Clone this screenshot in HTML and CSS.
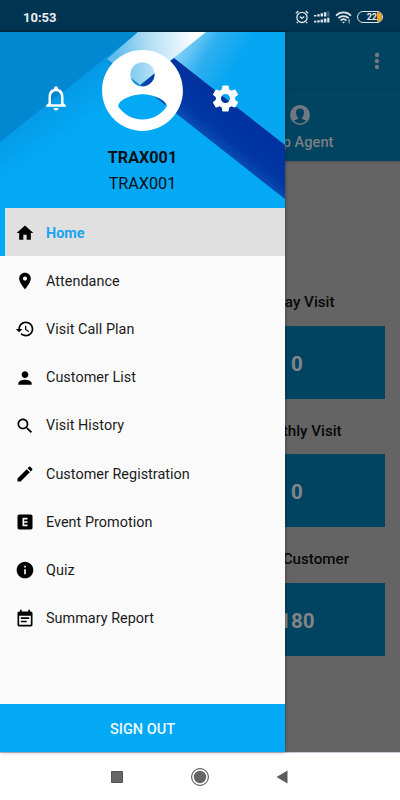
FILE: index.html
```html
<!DOCTYPE html>
<html lang="en">
<head>
    <meta charset="UTF-8">
    <meta name="viewport" content="width=device-width, initial-scale=1.0">
    <title>TRAX001 - Home</title>
    <link rel="stylesheet" href="styles.css">
</head>
<body>
    <div class="phone">
        <header class="status-bar">
            <span class="clock">10:53</span>
            <div class="status-icons">
                <svg width="14" height="14" viewBox="0 0 14 14" fill="none" stroke="#dfe6ea" stroke-width="1.3">
                    <circle cx="7" cy="7.4" r="5.1"/>
                    <path d="M.8 3.2 3.4 1M13.2 3.2 10.6 1M2.8 12l-1 1.2M11.2 12l1 1.2M4.8 6.5 7 8.4l2.3-1.9"/>
                </svg>
                <svg width="16" height="13" viewBox="0 0 16 13" fill="#dfe6ea">
                    <path d="M0 4h2.400v1.500H0zM3.300 3.200h2.400v2.300H3.300zM6.600 2.300H9v3.200H6.600zM9.900 1.200h2.400v4.300H9.900zM0 9.700h2.400v1.800H0zM3.300 9.200h2.400v2.300H3.300zM6.600 8.500H9v3H6.600zM9.900 7.600h2.400v3.900H9.900zM13.200 6.700h2.200v4.800h-2.200z"/>
                    <path d="M13.200.4h2.200v5.100h-2.200z" opacity=".3"/>
                </svg>
                <svg width="17" height="13" viewBox="0 0 17 13" fill="none" stroke="#dfe6ea" stroke-width="1.7">
                    <path d="M1 4.600c4.200-4.200 10.800-4.200 15 0M3.300 7.200c3-2.900 7.400-2.900 10.400 0M5.600 9.500c1.800-1.600 4-1.600 5.800 0"/>
                    <path d="M8.500 12.600 6.900 10.700h3.200z" fill="#dfe6ea" stroke="none"/>
                    <path d="M14.200 8.500v4M13 9.700l1.200-1.200" stroke-width=".8"/>
                </svg>
                <span class="battery"><b>22</b><i></i></span>
            </div>
        </header>

        <main class="screen">
            <div class="app-bar">
                <svg width="6" height="18" viewBox="0 0 6 18" fill="#787878">
                    <circle cx="3" cy="3" r="2.200"/><circle cx="3" cy="9" r="2.200"/><circle cx="3" cy="15" r="2.200"/>
                </svg>
            </div>
            <div class="tabs">
                <div class="tab">
                    <svg width="20" height="20" viewBox="0 0 20 20">
                        <circle cx="10" cy="10" r="9.200" fill="#014462" stroke="#717980" stroke-width="1.400"/>
                        <path fill="#717980" d="M10 .8a9.200 9.200 0 0 0-6.800 15.400c1.400-1 3.300-1.300 4.600-2.100.3-.5.2-1.200 0-1.700C6.600 11.300 6 9.300 6 7.300 6 5 7.600 3.500 10 3.500s4 1.500 4 3.800c0 2-.6 4-1.800 5.100-.2.500-.3 1.200 0 1.700 1.300.8 3.200 1.100 4.600 2.100A9.200 9.200 0 0 0 10 .8z"/>
                    </svg>
                    <span>Top Agent</span>
                </div>
            </div>
            <div class="stats">
                <h2>Today Visit</h2>
                <div class="stat">0</div>
                <h2>Monthly Visit</h2>
                <div class="stat">0</div>
                <h2>Total Customer</h2>
                <div class="stat">180</div>
            </div>

            <aside class="drawer">
                <div class="drawer-header">
                    <svg class="artwork" width="285" height="176" viewBox="0 0 285 176">
                        <defs>
                            <linearGradient id="base" gradientUnits="userSpaceOnUse" x1="50" y1="20" x2="95" y2="85">
                                <stop offset=".25" stop-color="#0692e0"/>
                                <stop offset="1" stop-color="#03a9f4"/>
                            </linearGradient>
                            <linearGradient id="beam" gradientUnits="userSpaceOnUse" x1="115" y1="20" x2="196" y2="14">
                                <stop offset="0" stop-color="#61bcec"/>
                                <stop offset=".45" stop-color="#b5e0f5"/>
                                <stop offset="1" stop-color="#fff"/>
                            </linearGradient>
                            <linearGradient id="sky" gradientUnits="userSpaceOnUse" x1="183" y1="8" x2="232" y2="38">
                                <stop offset="0" stop-color="#8bd3f8"/>
                                <stop offset=".5" stop-color="#2cafef"/>
                                <stop offset="1" stop-color="#07a6f2"/>
                            </linearGradient>
                            <linearGradient id="band" gradientUnits="userSpaceOnUse" x1="238" y1="88" x2="211" y2="121">
                                <stop offset="0" stop-color="#00339f"/>
                                <stop offset=".5" stop-color="#0238a3"/>
                                <stop offset="1" stop-color="#0a5cbc"/>
                            </linearGradient>
                        </defs>
                        <path fill="url(#base)" d="M0 0h285v176H0z"/>
                        <path fill="#0288d1" d="M0 0h138L0 110z"/>
                        <path fill="url(#sky)" d="M206 0h79v114L172 26z"/>
                        <path fill="url(#band)" d="M174 26l111 87v54L140 53z"/>
                        <path fill="#0b86d8" d="M107 27l33 26-8 6-18-20z"/>
                        <path fill="url(#beam)" d="M138 0h68l-66 53-33-26z"/>
                    </svg>
                    <div class="profile-row">
                        <svg width="30" height="30" viewBox="0 0 24 24" fill="#fff"><path d="M12 22c1.100 0 2-.9 2-2h-4c0 1.100.9 2 2 2zm6-6v-5c0-3.070-1.630-5.640-4.500-6.320V4c0-.83-.67-1.500-1.500-1.500s-1.500.67-1.500 1.500v.68C7.640 5.360 6 7.920 6 11v5l-2 2v1h16v-1l-2-2zm-2 1H8v-6c0-2.480 1.510-4.500 4-4.500s4 2.020 4 4.500v6z"/></svg>
                        <svg class="avatar" width="97" height="97" viewBox="0 0 24 24" fill="#fff"><path d="M12 2C6.480 2 2 6.480 2 12s4.480 10 10 10 10-4.480 10-10S17.520 2 12 2zm0 3c1.660 0 3 1.340 3 3s-1.340 3-3 3-3-1.340-3-3 1.340-3 3-3zm0 14.200c-2.500 0-4.710-1.280-6-3.220.03-1.990 4-3.080 6-3.080 1.990 0 5.970 1.090 6 3.080-1.290 1.940-3.500 3.220-6 3.220z"/></svg>
                        <svg width="31" height="31" viewBox="0 0 24 24" fill="#fff"><path d="M19.430 12.980c.04-.32.07-.64.07-.98s-.03-.66-.07-.98l2.110-1.650c.19-.15.24-.42.12-.64l-2-3.460c-.12-.22-.39-.3-.61-.22l-2.490 1c-.52-.4-1.080-.73-1.690-.98l-.38-2.650C14.460 2.180 14.250 2 14 2h-4c-.25 0-.46.18-.49.42l-.38 2.650c-.61.25-1.170.59-1.690.98l-2.490-1c-.23-.09-.49 0-.61.22l-2 3.460c-.13.22-.07.49.12.64l2.110 1.650c-.04.32-.07.65-.07.98s.03.66.07.98l-2.110 1.650c-.19.15-.24.42-.12.64l2 3.460c.12.22.39.3.61.22l2.490-1c.52.4 1.080.73 1.690.98l.38 2.650c.03.24.24.42.49.42h4c.25 0 .46-.18.49-.42l.38-2.650c.61-.25 1.170-.59 1.690-.98l2.490 1c.23.09.49 0 .61-.22l2-3.460c.12-.22.07-.49-.12-.64l-2.110-1.650zM12 15.500c-1.930 0-3.500-1.570-3.500-3.500s1.570-3.500 3.500-3.500 3.500 1.570 3.500 3.500-1.570 3.500-3.500 3.500z"/></svg>
                    </div>
                    <div class="user-name">TRAX001</div>
                    <div class="user-code">TRAX001</div>
                </div>

                <nav class="menu">
                    <a class="menu-item active">
                        <svg viewBox="0 0 24 24"><path d="M10 20v-6h4v6h5v-8h3L12 3 2 12h3v8z"/></svg>
                        <span>Home</span>
                    </a>
                    <a class="menu-item">
                        <svg viewBox="0 0 24 24"><path d="M12 2C8.130 2 5 5.130 5 9c0 5.250 7 13 7 13s7-7.750 7-13c0-3.870-3.130-7-7-7zm0 9.500c-1.380 0-2.500-1.120-2.500-2.500s1.120-2.500 2.500-2.500 2.500 1.120 2.500 2.500-1.120 2.500-2.500 2.500z"/></svg>
                        <span>Attendance</span>
                    </a>
                    <a class="menu-item">
                        <svg viewBox="0 0 24 24"><path d="M13 3c-4.970 0-9 4.030-9 9H1l3.890 3.890.07.14L9 12H6c0-3.870 3.130-7 7-7s7 3.130 7 7-3.130 7-7 7c-1.930 0-3.680-.79-4.940-2.060l-1.420 1.420C8.270 19.990 10.510 21 13 21c4.970 0 9-4.030 9-9s-4.030-9-9-9zm-1 5v5l4.280 2.540.72-1.210-3.500-2.080V8H12z"/></svg>
                        <span>Visit Call Plan</span>
                    </a>
                    <a class="menu-item">
                        <svg viewBox="0 0 24 24"><path d="M12 12c2.210 0 4-1.790 4-4s-1.790-4-4-4-4 1.790-4 4 1.790 4 4 4zm0 2c-2.670 0-8 1.340-8 4v2h16v-2c0-2.660-5.330-4-8-4z"/></svg>
                        <span>Customer List</span>
                    </a>
                    <a class="menu-item">
                        <svg viewBox="0 0 24 24"><path d="M15.500 14h-.79l-.28-.27C15.410 12.590 16 11.110 16 9.500 16 5.910 13.090 3 9.500 3S3 5.910 3 9.500 5.910 16 9.500 16c1.610 0 3.090-.59 4.230-1.570l.27.28v.79l5 4.990L20.490 19l-4.990-5zm-6 0C7.010 14 5 11.990 5 9.500S7.010 5 9.500 5 14 7.010 14 9.500 11.990 14 9.500 14z"/></svg>
                        <span>Visit History</span>
                    </a>
                    <a class="menu-item">
                        <svg viewBox="0 0 24 24"><path d="M3 17.250V21h3.750L17.810 9.940l-3.750-3.750L3 17.250zM20.710 7.040c.39-.39.39-1.020 0-1.410l-2.340-2.340c-.39-.39-1.020-.39-1.410 0l-1.830 1.830 3.750 3.750 1.830-1.830z"/></svg>
                        <span>Customer Registration</span>
                    </a>
                    <a class="menu-item">
                        <svg viewBox="0 0 24 24"><path d="M19 3H5c-1.100 0-2 .9-2 2v14c0 1.100.9 2 2 2h14c1.100 0 2-.9 2-2V5c0-1.100-.9-2-2-2zm-4 6h-4v2h4v2h-4v2h4v2H9V7h6v2z"/></svg>
                        <span>Event Promotion</span>
                    </a>
                    <a class="menu-item">
                        <svg viewBox="0 0 24 24"><path d="M12 2C6.480 2 2 6.480 2 12s4.480 10 10 10 10-4.480 10-10S17.520 2 12 2zm1 15h-2v-6h2v6zm0-8h-2V7h2v2z"/></svg>
                        <span>Quiz</span>
                    </a>
                    <a class="menu-item">
                        <svg viewBox="0 0 24 24"><path d="M17 10H7v2h10v-2zm2-7h-1V1h-2v2H8V1H6v2H5c-1.110 0-1.990.9-1.990 2L3 19c0 1.100.89 2 2 2h14c1.100 0 2-.9 2-2V5c0-1.100-.9-2-2-2zm0 16H5V8h14v11zm-5-5H7v2h7v-2z"/></svg>
                        <span>Summary Report</span>
                    </a>
                </nav>

                <button class="sign-out">SIGN OUT</button>
            </aside>
        </main>

        <footer class="nav-bar">
            <svg width="20" height="20" viewBox="0 0 20 20"><path fill="#666" stroke="#555" d="M4.500 4.500h11v11h-11z"/></svg>
            <svg width="20" height="20" viewBox="0 0 20 20"><circle cx="10" cy="10" r="8.400" fill="none" stroke="#444"/><circle cx="10" cy="10" r="6.200" fill="#666"/></svg>
            <svg width="20" height="20" viewBox="0 0 20 20"><path fill="#5c5c5c" d="M14.500 3.500v13l-11-6.500z"/></svg>
        </footer>
    </div>
</body>
</html>
```
FILE: styles.css
```css
* {
    box-sizing: border-box;
}

body {
    margin: 0;
    font-family: Roboto, sans-serif;
    background: #fff;
}

svg {
    display: block;
    flex-shrink: 0;
}

.phone {
    width: 400px;
    height: 800px;
    display: flex;
    flex-direction: column;
    overflow: hidden;
}

/* Status bar */
.status-bar {
    height: 32px;
    padding: 3px 17px 0 23px;
    display: flex;
    align-items: center;
    justify-content: space-between;
    background: #013450;
    border-bottom: 1px solid #012b45;
}

.clock {
    color: #e9eef1;
    font-size: 13px;
    font-weight: 700;
}

.status-icons {
    display: flex;
    align-items: center;
    gap: 5px;
}

.battery {
    width: 26px;
    height: 12px;
    display: flex;
    justify-content: flex-end;
    border: 1.5px solid #dfe6ea;
    border-radius: 6px;
    overflow: hidden;
    color: #e9eef1;
    font-size: 9px;
    line-height: 10.5px;
}

.battery i {
    width: 5px;
    background: #f5a623;
}

/* Dimmed home screen */
.screen {
    position: relative;
    height: 720px;
    background: #646464;
}

.app-bar {
    height: 58px;
    padding-right: 20px;
    display: flex;
    align-items: center;
    justify-content: flex-end;
    background: #014462;
    border-bottom: 1px solid #013b58;
}

.tabs {
    height: 71px;
    display: flex;
    justify-content: flex-end;
    background: #014462;
    box-shadow: 0 1px 3px rgba(0, 0, 0, 0.2);
}

.tab {
    width: 200px;
    padding-top: 15px;
    display: flex;
    flex-direction: column;
    align-items: center;
    gap: 7px;
    color: #7b7f81;
    font-size: 14.6px;
    font-weight: 500;
    line-height: 20px;
}

.stats {
    width: 176px;
    margin: 129px 0 0 209px;
    text-align: center;
}

.stats h2 {
    height: 35.5px;
    margin: 0;
    color: #080808;
    font-size: 15.2px;
    font-weight: 500;
    line-height: 25px;
}

.stat {
    height: 73.3px;
    margin-bottom: 19.9px;
    background: #014462;
    color: #858585;
    font-size: 20.5px;
    font-weight: 700;
    line-height: 76px;
}

/* Drawer */
.drawer {
    position: absolute;
    top: 0;
    left: 0;
    width: 285px;
    height: 720px;
    display: flex;
    flex-direction: column;
    background: #fafafa;
    box-shadow: 0 0 4px rgba(0, 0, 0, 0.4);
}

.drawer-header {
    position: relative;
    height: 176px;
    color: #0c1015;
    text-align: center;
}

.artwork {
    position: absolute;
    top: 0;
    left: 0;
}

.profile-row {
    position: relative;
    height: 116px;
    padding: 16px 44px 0 41px;
    display: flex;
    align-items: center;
    justify-content: space-between;
}

.avatar {
    margin: -16px 0 0 4px;
}

.user-name,
.user-code {
    position: relative;
    font-size: 16.2px;
    line-height: 20px;
}

.user-name {
    font-weight: 700;
}

.user-code {
    margin-top: 6px;
}

.menu {
    flex: 1;
}

.menu-item {
    height: 48.2px;
    padding: 2px 0 0 15px;
    display: flex;
    align-items: center;
    gap: 11px;
    color: #1b1b1b;
    font-size: 14.4px;
    letter-spacing: 0.03px;
}

.menu-item svg {
    width: 20px;
    height: 20px;
    fill: #000;
}

.menu-item.active {
    padding-left: 10px;
    border-left: 5px solid #03a9f4;
    background: #e0e0e0;
    color: #18a4f2;
    font-weight: 700;
}

.sign-out {
    height: 48px;
    padding: 2px 0 0;
    border: 0;
    background: #03a9f4;
    color: #eef8fe;
    font-family: inherit;
    font-size: 14.5px;
    font-weight: 500;
}

/* System navigation */
.nav-bar {
    height: 48px;
    display: flex;
    align-items: center;
    justify-content: center;
    gap: 63px;
    background: #fff;
    border-top: 1px solid #c3cad6;
}
```
